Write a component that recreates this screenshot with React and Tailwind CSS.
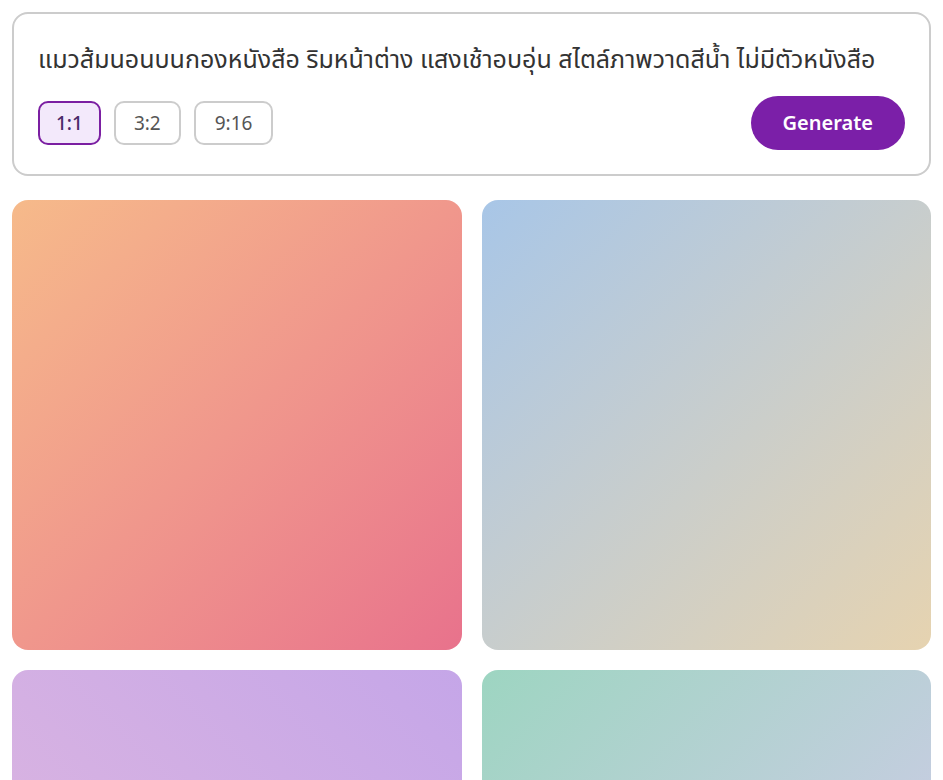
import React, { useState } from 'react';

const RATIOS = [
  { label: '1:1', pad: 'px-[16px]' },
  { label: '3:2', pad: 'px-[18px]' },
  { label: '9:16', pad: 'px-[19px]' },
];

const TILES = [
  'bg-gradient-to-br from-[#f6ba8a] to-[#e8728c]',
  'bg-gradient-to-br from-[#a8c6e7] to-[#e6d3b0]',
  'bg-gradient-to-tr from-[#e2b9de] to-[#c5a6e8]',
  'bg-gradient-to-br from-[#9dd5c1] to-[#d8c8f0]',
];

const App = () => {
  const [ratio, setRatio] = useState('1:1');

  return (
    <div className="min-h-screen bg-white p-3 font-['Noto_Sans','Noto_Sans_Thai',sans-serif]">
      {/* Prompt card */}
      <div className="border-2 border-[#cccccc] rounded-2xl px-6 pt-6 pb-6">
        <p className="text-[25px] leading-[40px] text-[#333333] whitespace-nowrap">
          แมวส้มนอนบนกองหนังสือ ริมหน้าต่าง แสงเช้าอบอุ่น สไตล์ภาพวาดสีน้ำ ไม่มีตัวหนังสือ
        </p>
        <div className="mt-[18px] flex items-center justify-between">
          <div className="flex items-center gap-[13px]">
            {RATIOS.map((r) => (
              <button
                key={r.label}
                onClick={() => setRatio(r.label)}
                className={
                  r.label === ratio
                    ? `h-[44px] ${r.pad} rounded-[10px] border-2 border-[#7b1fa2] bg-[#f3e9fb] text-[19px] font-medium text-[#4a2a6a]`
                    : `h-[44px] ${r.pad} rounded-[10px] border-2 border-[#cccccc] bg-white text-[19px] text-[#555555]`
                }
              >
                {r.label}
              </button>
            ))}
          </div>
          <button className="h-[54px] px-8 rounded-full bg-[#7b1fa8] text-white text-[20px] font-semibold">
            Generate
          </button>
        </div>
      </div>

      {/* Results */}
      <div className="mt-6 grid grid-cols-2 gap-5">
        {TILES.map((t, i) => (
          <div key={i} className={`aspect-square rounded-2xl ${t}`} />
        ))}
      </div>
    </div>
  );
};

export default App;
